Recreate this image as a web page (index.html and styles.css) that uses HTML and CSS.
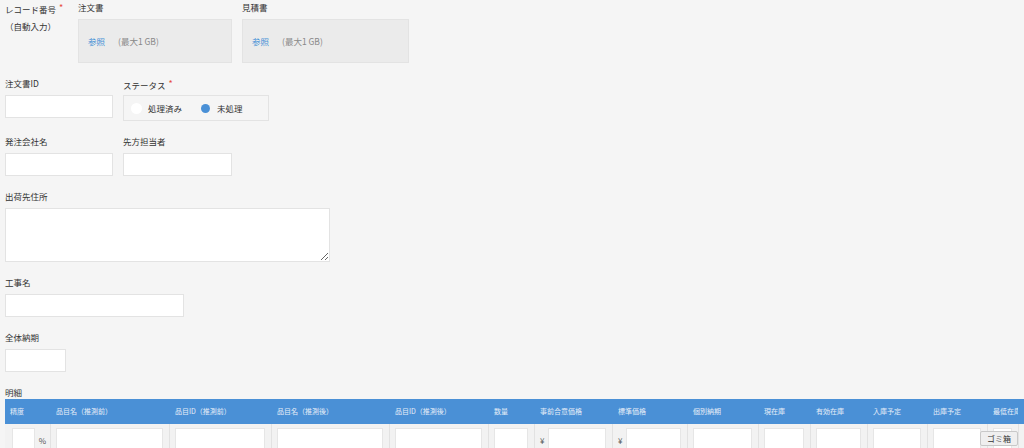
FILE: index.html
```html
<!DOCTYPE html>
<html>
<head>
    <meta charset="UTF-8">
    <link rel="stylesheet" href="styles.css">
</head>
<body>
    <div class="form">
        <div class="row row-first">
            <div class="field recno">
                <div class="label">レコード番号<span class="req">*</span></div>
                <div class="auto">（自動入力）</div>
            </div>
            <div class="field">
                <div class="label">注文書</div>
                <div class="file file-order"><span class="browse">参照</span><span class="limit">(最大1 GB)</span></div>
            </div>
            <div class="field">
                <div class="label">見積書</div>
                <div class="file file-quote"><span class="browse">参照</span><span class="limit">(最大1 GB)</span></div>
            </div>
        </div>

        <div class="row">
            <div class="field">
                <div class="label">注文書ID</div>
                <input class="text w-small" type="text">
            </div>
            <div class="field">
                <div class="label">ステータス<span class="req">*</span></div>
                <div class="radios">
                    <span class="radio"></span><span class="radio-text">処理済み</span>
                    <span class="radio on"></span><span class="radio-text">未処理</span>
                </div>
            </div>
        </div>

        <div class="row">
            <div class="field">
                <div class="label">発注会社名</div>
                <input class="text w-small" type="text">
            </div>
            <div class="field">
                <div class="label">先方担当者</div>
                <input class="text w-small2" type="text">
            </div>
        </div>

        <div class="row">
            <div class="field">
                <div class="label">出荷先住所</div>
                <textarea class="area"></textarea>
            </div>
        </div>

        <div class="row">
            <div class="field">
                <div class="label">工事名</div>
                <input class="text w-mid" type="text">
            </div>
        </div>

        <div class="row">
            <div class="field">
                <div class="label">全体納期</div>
                <input class="text w-date" type="text">
            </div>
        </div>

        <div class="row">
            <div class="field">
                <div class="label label-table">明細</div>
                <div class="table-wrap">
                    <div class="grid head">
                        <div class="th th-first">精度</div>
                        <div class="th">品目名（推測前）</div>
                        <div class="th">品目ID（推測前）</div>
                        <div class="th">品目名（推測後）</div>
                        <div class="th">品目ID（推測後）</div>
                        <div class="th">数量</div>
                        <div class="th">事前合意価格</div>
                        <div class="th">標準価格</div>
                        <div class="th">個別納期</div>
                        <div class="th">現在庫</div>
                        <div class="th">有効在庫</div>
                        <div class="th">入庫予定</div>
                        <div class="th">出庫予定</div>
                        <div class="th">最低在庫</div>
                        <div class="th"></div>
                    </div>
                    <div class="grid body-row">
                        <div class="td td-first"><input class="cell-input" type="text"><span class="unit">%</span></div>
                        <div class="td"><input class="cell-input" type="text"></div>
                        <div class="td"><input class="cell-input" type="text"></div>
                        <div class="td"><input class="cell-input" type="text"></div>
                        <div class="td"><input class="cell-input" type="text"></div>
                        <div class="td"><input class="cell-input" type="text"></div>
                        <div class="td"><span class="unit">¥</span><input class="cell-input" type="text"></div>
                        <div class="td"><span class="unit">¥</span><input class="cell-input" type="text"></div>
                        <div class="td"><input class="cell-input" type="text"></div>
                        <div class="td"><input class="cell-input" type="text"></div>
                        <div class="td"><input class="cell-input" type="text"></div>
                        <div class="td"><input class="cell-input" type="text"></div>
                        <div class="td"><input class="cell-input" type="text"></div>
                        <div class="td"><input class="cell-input" type="text"></div>
                        <div class="td"></div>
                    </div>
                </div>
            </div>
        </div>
    </div>

    <button class="trash">ゴミ箱</button>
</body>
</html>
```

FILE: styles.css
```css
html, body {
    overflow: hidden;
}
body {
    margin: 0;
    background-color: #f5f5f5;
    color: #333;
    font-family: "Noto Sans CJK JP", "Noto Sans", sans-serif;
    font-size: 8.5px;
}
.form {
    padding: 1px 0 0 5px;
    display: flex;
    flex-direction: column;
    gap: 14px;
}
.row {
    display: flex;
    align-items: flex-start;
    gap: 10px;
}
.field {
    display: flex;
    flex-direction: column;
}
.label {
    height: 13px;
    line-height: 13px;
    margin-bottom: 5px;
    white-space: nowrap;
}
.label-table {
    margin-bottom: 0;
}
.req {
    color: #e74c3c;
    font-size: 9px;
    margin-left: 3px;
    vertical-align: 2px;
}
.recno {
    width: 63px;
}
.auto {
    margin-top: 1px;
    line-height: 13px;
}

/* file upload boxes */
.file {
    height: 44px;
    box-sizing: border-box;
    border: 1px solid #e3e3e3;
    background-color: #ebebeb;
    display: flex;
    align-items: center;
    gap: 13px;
    padding-left: 9px;
}
.file-order { width: 154px; }
.file-quote { width: 167px; }
.browse {
    color: #3f8fd6;
}
.limit {
    color: #888;
}

/* inputs */
.text {
    box-sizing: border-box;
    height: 23px;
    border: 1px solid #e3e3e3;
    background-color: #fff;
    margin: 0;
    padding: 0 4px;
}
.w-small { width: 108px; }
.w-small2 { width: 109px; }
.w-mid { width: 179px; }
.w-date { width: 61px; }
.area {
    box-sizing: border-box;
    width: 325px;
    height: 54px;
    margin: 0;
    border: 1px solid #e3e3e3;
    background-color: #fff;
    resize: both;
}

/* radio group */
.radios {
    box-sizing: border-box;
    width: 146px;
    height: 26px;
    border: 1px solid #e3e3e3;
    display: flex;
    align-items: center;
    padding-left: 7px;
}
.radio {
    width: 11px;
    height: 11px;
    border-radius: 50%;
    background-color: #fff;
    margin-right: 6px;
}
.radio.on {
    width: 9px;
    height: 9px;
    margin-left: 19px;
    margin-right: 7px;
    background-color: #4a90d6;
}

/* detail table */
.table-wrap {
    width: 1019px;
    overflow: hidden;
}
.grid {
    display: grid;
    grid-template-columns: 45px 119px 102px 118px 99px 46px 78px 75px 71px 52px 57px 60px 60px 31px 80px;
    width: 1093px;
}
.head {
    height: 25px;
    background-color: #4a90d6;
}
.th {
    color: #e6eef8;
    font-size: 7px;
    line-height: 25px;
    padding-left: 6px;
    white-space: nowrap;
    overflow: hidden;
}
.th-first {
    padding-left: 5px;
}
.body-row {
    background-color: #f2f2f2;
}
.td {
    box-sizing: border-box;
    display: flex;
    align-items: center;
    gap: 4px;
    padding: 4px 6px 4px 5px;
    border-left: 1px solid #e2e2e2;
}
.td-first {
    border-left: none;
    padding: 4px 4px 4px 7px;
}
.cell-input {
    flex: 1;
    min-width: 0;
    box-sizing: border-box;
    height: 24px;
    margin: 0;
    border: 1px solid #e6e6e6;
    background-color: #fff;
}
.unit {
    color: #555;
    font-size: 8px;
}

.trash {
    position: fixed;
    right: 6px;
    bottom: 2px;
    height: 15px;
    padding: 0 6px;
    font-family: "Noto Sans CJK JP", sans-serif;
    font-size: 8px;
    color: #333;
    background-color: #efefef;
    border: 1px solid #c8c8c8;
    border-radius: 2px;
}
```
